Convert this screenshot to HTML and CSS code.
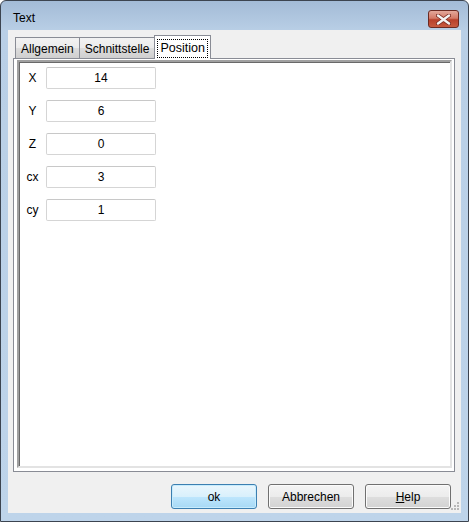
FILE: index.html
```html
<!DOCTYPE html>
<html>
<head>
<meta charset="utf-8">
<link rel="stylesheet" href="styles.css">
</head>
<body>
<div class="window">
  <div class="titlebar">
    <span class="title">Text</span>
    <div class="close">
      <svg width="15" height="11" viewBox="0 0 15 11">
        <path d="M2 1.5 L13 9.5 M13 1.5 L2 9.5" stroke="#7a2a20" stroke-width="4" stroke-linecap="round"/>
        <path d="M2 1.5 L13 9.5 M13 1.5 L2 9.5" stroke="#f4f4f4" stroke-width="2.4" stroke-linecap="round"/>
      </svg>
    </div>
  </div>
  <div class="client">
    <div class="tabs">
      <div class="tab">Allgemein</div>
      <div class="tab">Schnittstelle</div>
      <div class="tab active"><span class="focus">Position</span></div>
    </div>
    <div class="panel">
      <div class="sunken">
        <div class="form">
          <div class="row"><span class="lbl">X</span><div class="field">14</div></div>
          <div class="row"><span class="lbl">Y</span><div class="field">6</div></div>
          <div class="row"><span class="lbl">Z</span><div class="field">0</div></div>
          <div class="row"><span class="lbl">cx</span><div class="field">3</div></div>
          <div class="row"><span class="lbl">cy</span><div class="field">1</div></div>
        </div>
      </div>
    </div>
    <div class="buttons">
      <div class="btn default">ok</div>
      <div class="btn">Abbrechen</div>
      <div class="btn"><u>H</u>elp</div>
    </div>
    <div class="grip">
      <svg width="9" height="9" viewBox="0 0 9 9">
        <g fill="#b8b8b8">
          <rect x="6" y="0" width="2" height="2"/>
          <rect x="3" y="3" width="2" height="2"/>
          <rect x="6" y="3" width="2" height="2"/>
          <rect x="0" y="6" width="2" height="2"/>
          <rect x="3" y="6" width="2" height="2"/>
          <rect x="6" y="6" width="2" height="2"/>
        </g>
      </svg>
    </div>
  </div>
</div>
</body>
</html>
```

FILE: styles.css
```css
html, body {
  margin: 0;
  padding: 0;
  width: 469px;
  height: 522px;
  overflow: hidden;
  background: #ffffff;
}
body {
  font-family: "Liberation Sans", Arial, sans-serif;
  font-size: 12px;
  color: #000;
}
.window {
  box-sizing: border-box;
  width: 469px;
  height: 522px;
  border: 1px solid #3c4450;
  border-radius: 6px 6px 0 0;
  background: linear-gradient(to bottom, #a3bbd7 0px, #b9cfe6 30px, #bed4ea 100%);
  display: flex;
  flex-direction: column;
  padding: 0 7px 8px 7px;
}
.titlebar {
  height: 29px;
  flex: none;
  display: flex;
  align-items: center;
  position: relative;
}
.title {
  margin-left: 5px;
  margin-top: 4px;
  font-size: 12px;
  color: #000;
}
.close {
  position: absolute;
  right: 2px;
  top: 9px;
  box-sizing: border-box;
  width: 31px;
  height: 18px;
  border: 1px solid #6b2a22;
  border-radius: 3px;
  background: linear-gradient(to bottom, #e3a89b 0%, #d47a67 45%, #b8402b 55%, #c75a3f 100%);
  display: flex;
  align-items: center;
  justify-content: center;
}
.client {
  flex: 1;
  background: #f0f0f0;
  display: flex;
  flex-direction: column;
  padding: 5px 6px 0 5px;
  position: relative;
}
.tabs {
  display: flex;
  align-items: flex-end;
  height: 23px;
  padding-left: 2px;
  position: relative;
  z-index: 1;
}
.tab {
  box-sizing: border-box;
  height: 21px;
  padding: 2px 5px 0 5px;
  border: 1px solid #898c95;
  border-bottom: none;
  background: linear-gradient(to bottom, #f2f2f2 0%, #ebebeb 50%, #dddddd 51%, #cfcfcf 100%);
  display: flex;
  align-items: center;
  font-size: 12px;
  margin-right: -1px;
}
.tab.active {
  height: 24px;
  background: #ffffff;
  margin-bottom: -1px;
  padding: 1px 2px 0 2px;
  font-size: 12.5px;
}
.focus {
  border: 1px dotted #000;
  padding: 1px 2px;
  line-height: 15px;
}
.panel {
  box-sizing: border-box;
  height: 414px;
  border: 1px solid #898c95;
  background: #ffffff;
  padding: 1px 2px 3px 3px;
  display: flex;
}
.sunken {
  flex: 1;
  border-top: 2px solid #a0a0a0;
  border-left: 2px solid #a0a0a0;
  border-right: 2px solid #e3e3e3;
  border-bottom: 2px solid #e3e3e3;
  box-shadow: inset 1px 1px 0 #696969;
  background: #ffffff;
  padding: 5px 0 0 0;
}
.form {
  display: flex;
  flex-direction: column;
  gap: 11px;
}
.row {
  display: flex;
  align-items: center;
}
.lbl {
  width: 27px;
  text-align: center;
  font-size: 12px;
}
.field {
  box-sizing: border-box;
  width: 110px;
  height: 22px;
  border: 1px solid #d5d5d5;
  border-top-color: #c8c8c8;
  border-radius: 2px;
  background: #fff;
  display: flex;
  align-items: center;
  justify-content: center;
  font-size: 12px;
}
.buttons {
  display: flex;
  justify-content: flex-end;
  gap: 11px;
  margin-top: 12px;
  padding-right: 4px;
}
.btn {
  box-sizing: border-box;
  width: 86px;
  height: 25px;
  border: 1px solid #707070;
  border-radius: 3px;
  background: linear-gradient(to bottom, #f4f4f4 0%, #ececec 50%, #dedede 51%, #d2d2d2 100%);
  box-shadow: inset 0 0 0 1px #fbfbfb;
  display: flex;
  align-items: center;
  justify-content: center;
  font-size: 12px;
}
.btn.default {
  border-color: #3c7fb1;
  background: linear-gradient(to bottom, #eaf6fd 0%, #d9f0fc 50%, #bee6fd 51%, #a7d9f5 100%);
  box-shadow: inset 0 0 0 1px #c7ecfd;
}
.grip {
  position: absolute;
  right: 1px;
  bottom: 2px;
  line-height: 0;
}
```
